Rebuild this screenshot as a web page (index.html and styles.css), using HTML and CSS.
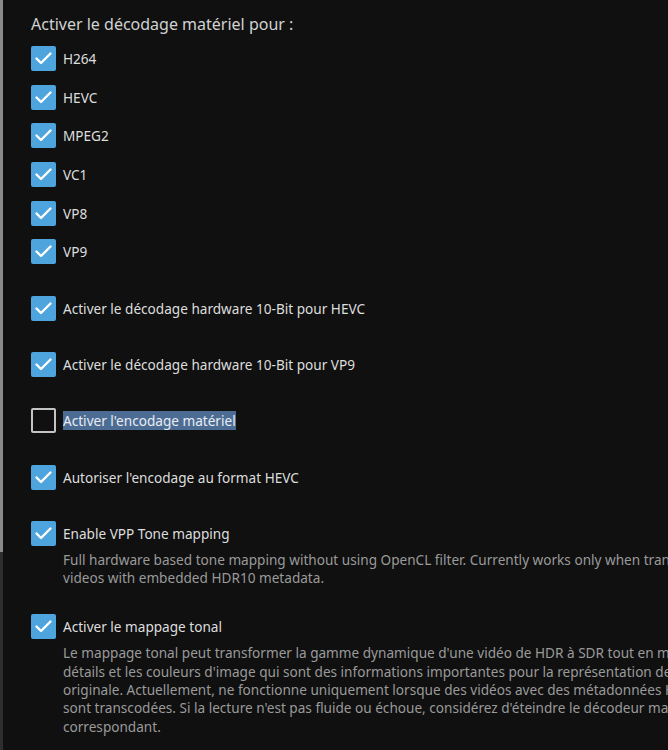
FILE: index.html
```html
<!DOCTYPE html>
<html lang="fr">
<head>
    <meta charset="UTF-8">
    <meta name="viewport" content="width=device-width, initial-scale=1.0">
    <title>Transcodage</title>
    <link rel="stylesheet" href="styles.css">
</head>
<body>
<div class="scrollbar"><div class="scrollbar-thumb"></div></div>
<div class="content">
    <h3 class="check-heading">Activer le décodage matériel pour :</h3>

    <div class="codec-list">
        <label class="check-row"><span class="box checked"><svg viewBox="0 0 25 25"><polyline points="5.5,12.5 10,17 19.5,7.5" /></svg></span><span class="check-label">H264</span></label>
        <label class="check-row"><span class="box checked"><svg viewBox="0 0 25 25"><polyline points="5.5,12.5 10,17 19.5,7.5" /></svg></span><span class="check-label">HEVC</span></label>
        <label class="check-row"><span class="box checked"><svg viewBox="0 0 25 25"><polyline points="5.5,12.5 10,17 19.5,7.5" /></svg></span><span class="check-label">MPEG2</span></label>
        <label class="check-row"><span class="box checked"><svg viewBox="0 0 25 25"><polyline points="5.5,12.5 10,17 19.5,7.5" /></svg></span><span class="check-label">VC1</span></label>
        <label class="check-row"><span class="box checked"><svg viewBox="0 0 25 25"><polyline points="5.5,12.5 10,17 19.5,7.5" /></svg></span><span class="check-label">VP8</span></label>
        <label class="check-row"><span class="box checked"><svg viewBox="0 0 25 25"><polyline points="5.5,12.5 10,17 19.5,7.5" /></svg></span><span class="check-label">VP9</span></label>
    </div>

    <div class="option">
        <label class="check-row"><span class="box checked"><svg viewBox="0 0 25 25"><polyline points="5.5,12.5 10,17 19.5,7.5" /></svg></span><span class="check-label">Activer le décodage hardware 10-Bit pour HEVC</span></label>
    </div>
    <div class="option">
        <label class="check-row"><span class="box checked"><svg viewBox="0 0 25 25"><polyline points="5.5,12.5 10,17 19.5,7.5" /></svg></span><span class="check-label">Activer le décodage hardware 10-Bit pour VP9</span></label>
    </div>
    <div class="option">
        <label class="check-row"><span class="box"></span><span class="check-label"><span class="selected">Activer l'encodage matériel</span></span></label>
    </div>
    <div class="option">
        <label class="check-row"><span class="box checked"><svg viewBox="0 0 25 25"><polyline points="5.5,12.5 10,17 19.5,7.5" /></svg></span><span class="check-label">Autoriser l'encodage au format HEVC</span></label>
    </div>
    <div class="option with-desc">
        <label class="check-row"><span class="box checked"><svg viewBox="0 0 25 25"><polyline points="5.5,12.5 10,17 19.5,7.5" /></svg></span><span class="check-label">Enable VPP Tone mapping</span></label>
        <div class="field-desc">Full hardware based tone mapping without using OpenCL filter. Currently works only when transcoding<br>videos with embedded HDR10 metadata.</div>
    </div>
    <div class="option with-desc">
        <label class="check-row"><span class="box checked"><svg viewBox="0 0 25 25"><polyline points="5.5,12.5 10,17 19.5,7.5" /></svg></span><span class="check-label">Activer le mappage tonal</span></label>
        <div class="field-desc">Le mappage tonal peut transformer la gamme dynamique d'une vidéo de HDR à SDR tout en maintenant les<br>détails et les couleurs d'image qui sont des informations importantes pour la représentation de la scène<br>originale. Actuellement, ne fonctionne uniquement lorsque des vidéos avec des métadonnées HDR10 ou HLG<br>sont transcodées. Si la lecture n'est pas fluide ou échoue, considérez d'éteindre le décodeur matériel<br>correspondant.</div>
    </div>
</div>
</body>
</html>
```

FILE: styles.css
```css
html {
    background-color: #101010;
}
html, body {
    margin: 0;
    padding: 0;
}
body {
    display: flex;
    height: 750px;
    overflow: hidden;
    font-family: "Noto Sans", "Open Sans", sans-serif;
}
.scrollbar {
    flex: 0 0 3px;
    background-color: #2e2e2e;
}
.scrollbar-thumb {
    height: 552px;
    background-color: #8a8a8a;
}
.content {
    flex: 1;
    min-width: 0;
    padding: 12px 0 0 28px;
}
.check-heading {
    margin: 0 0 10px;
    font-size: 16px;
    font-weight: 400;
    line-height: 24px;
    color: #d2d2d2;
}
.codec-list {
    display: flex;
    flex-direction: column;
    gap: 13.7px;
    margin-bottom: 31.2px;
}
.option {
    margin-bottom: 31.3px;
}
.option.with-desc {
    margin-bottom: 27px;
}
.check-row {
    display: flex;
    align-items: center;
    height: 25px;
}
.box {
    flex: 0 0 25px;
    box-sizing: border-box;
    width: 25px;
    height: 25px;
    border: 2px solid #c4c4c4;
    border-radius: 2px;
    margin-right: 7px;
}
.box.checked {
    border: none;
    background-color: #4ea4dd;
}
.box svg {
    display: block;
    width: 25px;
    height: 25px;
    fill: none;
    stroke: #fff;
    stroke-width: 2.4;
    stroke-linecap: round;
    stroke-linejoin: round;
}
.check-label {
    font-size: 13.6px;
    color: #dedede;
    white-space: nowrap;
}
.selected {
    background-color: #4d6c94;
    color: #e8ecf2;
}
.field-desc {
    margin: 5px 0 0 32px;
    font-size: 13.6px;
    line-height: 18.3px;
    color: #9a9a9a;
    white-space: nowrap;
}
```
